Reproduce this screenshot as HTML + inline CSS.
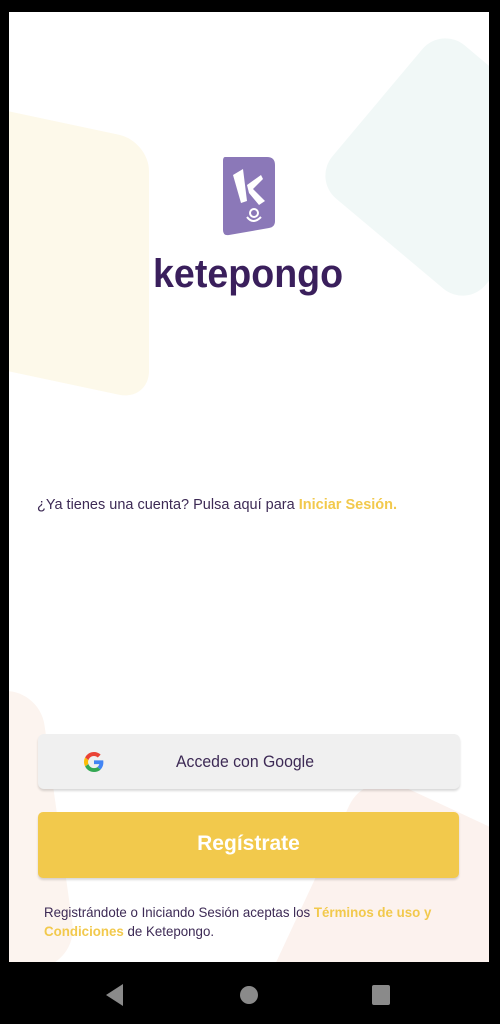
<!DOCTYPE html>
<html><head><meta charset="utf-8">
<style>
html,body{margin:0;padding:0;width:500px;height:1024px;background:#000;overflow:hidden;font-family:"Liberation Sans",sans-serif;position:relative;}
#scr{position:absolute;left:9px;top:12px;width:480px;height:950px;background:#fff;overflow:hidden;}
.abs{position:absolute}
.t{color:#3d2a55;font-size:14px;transform-origin:left top;}
.y{color:#f2c94c;font-weight:bold}
</style></head><body>
<div id="scr">
  <div class="abs" style="left:-40px;top:110px;width:180px;height:260px;background:#fdf9ea;border-radius:30px;transform:skewY(12deg);"></div>
  <div class="abs" style="left:345px;top:55px;width:200px;height:200px;background:#f1f8f7;border-radius:30px;transform:rotate(40deg);"></div>
  <div class="abs" style="left:-60px;top:680px;width:110px;height:280px;background:#fcf4ef;border-radius:40px;transform:rotate(-8deg);"></div>
  <div class="abs" style="left:290px;top:800px;width:260px;height:260px;background:#fcf2ee;border-radius:40px;transform:rotate(25deg);"></div>

  <svg class="abs" style="left:212px;top:143px" width="56" height="82" viewBox="0 0 56 82">
    <path d="M4 2 H46 Q54 2 54 10 V66 Q54 72 48 73 L8 80 Q2 81 2 75 V6 Q2 2 4 2Z" fill="#8b78b8"/>
    <path d="M12 20 L22 14 L26 46 L20 48Z" fill="#fff"/>
    <path d="M26 30 L40 20 L42 24 L32 34 L44 46 L38 50 L28 38Z" fill="#fff"/>
    <circle cx="33" cy="58" r="4" fill="none" stroke="#fff" stroke-width="2"/>
    <path d="M26 62 Q32 70 40 62" fill="none" stroke="#fff" stroke-width="2"/>
  </svg>
  <div class="abs" style="left:144px;top:240px;font-size:40px;font-weight:bold;color:#3a1f5c;white-space:nowrap;transform:scaleX(0.94);transform-origin:left top;">ketepongo</div>

  <div class="abs t" style="left:28px;top:485px;white-space:nowrap;font-size:14.5px;">¿Ya tienes una cuenta? Pulsa aquí para <span class="y">Iniciar Sesión.</span></div>

  <div class="abs" style="left:29px;top:722px;width:422px;height:55px;background:#f0f0f0;border-radius:6px;box-shadow:0 2px 2px rgba(0,0,0,0.15);"></div>
  <svg class="abs" style="left:75px;top:740px" width="20" height="20" viewBox="0 0 48 48">
    <path fill="#EA4335" d="M24 9.5c3.5 0 6.6 1.2 9.1 3.6l6.8-6.8C35.8 2.4 30.3 0 24 0 14.6 0 6.6 5.4 2.7 13.3l7.9 6.1C12.5 13.6 17.8 9.5 24 9.5z"/>
    <path fill="#4285F4" d="M46.5 24.5c0-1.6-.1-3.1-.4-4.5H24v9h12.7c-.6 2.9-2.2 5.4-4.7 7.1l7.6 5.9c4.4-4.1 6.9-10.1 6.9-17.5z"/>
    <path fill="#FBBC05" d="M10.5 28.6c-.5-1.4-.8-3-.8-4.6s.3-3.2.8-4.6l-7.9-6.1C1 16.6 0 20.2 0 24s1 7.4 2.7 10.7l7.8-6.1z"/>
    <path fill="#34A853" d="M24 48c6.5 0 11.9-2.1 15.9-5.8l-7.6-5.9c-2.1 1.4-4.9 2.3-8.3 2.3-6.2 0-11.5-4.2-13.4-9.9l-7.9 6.1C6.6 42.6 14.6 48 24 48z"/>
  </svg>
  <div class="abs" style="left:167px;top:740px;font-size:17px;color:#3d2a55;transform:scaleX(0.93);transform-origin:left top;white-space:nowrap;">Accede con Google</div>

  <div class="abs" style="left:29px;top:800px;width:421px;height:66px;background:#f2c94c;border-radius:5px;box-shadow:0 2px 2px rgba(0,0,0,0.15);"></div>
  <div class="abs" style="left:29px;top:820px;width:421px;text-align:center;color:#fff;font-weight:bold;font-size:21px;">Regístrate</div>

  <div class="abs t" style="left:35px;top:891px;width:440px;line-height:19px;font-size:14px;transform:scaleX(0.95);">Registrándote o Iniciando Sesión aceptas los <span class="y">Términos de uso y Condiciones</span> de Ketepongo.</div>
</div>
<svg class="abs" style="left:106px;top:984px" width="18" height="22"><path d="M17 0 V22 L0 11Z" fill="#8a8a8a"/></svg>
<div class="abs" style="left:240px;top:986px;width:18px;height:18px;border-radius:50%;background:#8a8a8a"></div>
<div class="abs" style="left:372px;top:985px;width:18px;height:20px;border-radius:2px;background:#8a8a8a"></div>
</body></html>
